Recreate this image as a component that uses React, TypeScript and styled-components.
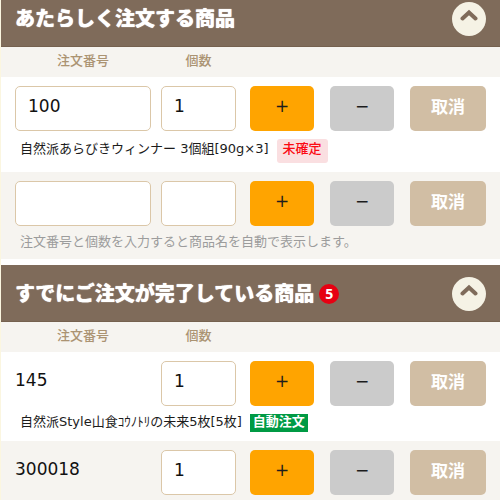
import React, { useState } from "react";
import styled, { createGlobalStyle, css } from "styled-components";

const GlobalStyle = createGlobalStyle`
  *, *::before, *::after { box-sizing: border-box; }
  body {
    margin: 0;
    background: #fff;
    color: #1c1c1c;
    font-family: "DejaVu Sans", "Noto Sans CJK JP", sans-serif;
    font-size: 13px;
  }
`;

const Page = styled.main`
  margin-top: -10px;
  border-left: 1px solid #fbf6e0;
  overflow-x: hidden;
`;

const Section = styled.section`
  & + & {
    margin-top: 6px;
  }
`;

const SectionHeader = styled.header`
  display: flex;
  align-items: center;
  justify-content: space-between;
  padding: 12px 14px 10px;
  background: #7f6b5a;
  border-bottom: 1px solid #75614f;
`;

const Title = styled.h2`
  display: flex;
  align-items: center;
  gap: 5px;
  margin: 0;
  padding-bottom: 2px;
  color: #fff;
  font-family: "Noto Sans CJK JP", sans-serif;
  font-size: 20px;
  font-weight: 900;
  line-height: 24px;
  text-shadow: 0 0 1px #fff;
`;

const CountBadge = styled.span`
  width: 20px;
  height: 20px;
  margin-top: 2px;
  border-radius: 50%;
  background: #e60012;
  font-family: "Noto Sans", sans-serif;
  font-size: 14px;
  font-weight: 700;
  line-height: 20px;
  text-align: center;
  text-shadow: none;
`;

const ToggleButton = styled.button`
  display: flex;
  align-items: center;
  justify-content: center;
  width: 34px;
  height: 34px;
  padding: 0 0 8px;
  border: 0;
  border-radius: 50%;
  background: #f5f2e5;
  cursor: pointer;
`;

const columns = css`
  display: grid;
  grid-template-columns: 221fr 236fr;
  column-gap: 14px;
  padding-left: 14px;
  padding-right: 14px;
`;

const Fields = styled.div`
  display: grid;
  grid-template-columns: 136fr 75fr;
  column-gap: 10px;
`;

const Actions = styled.div`
  display: grid;
  grid-template-columns: 64fr 64fr 76fr;
  column-gap: 16px;
`;

const ColumnHeads = styled.div`
  ${columns}
  padding-top: 4px;
  padding-bottom: 6px;
  background: #f6f4f0;
  color: #ab9372;
  font-weight: 500;
  line-height: 20px;
  text-align: center;
`;

const Row = styled.div<{ $shaded?: boolean }>`
  padding: 9px 0 7px;
  background: ${(p) => (p.$shaded ? "#f6f4f0" : "#fff")};
`;

const RowControls = styled.div`
  ${columns}
`;

const TextBox = styled.input`
  width: 100%;
  min-width: 0;
  height: 45px;
  padding: 0 12px 6px;
  border: 1px solid #dbc7a8;
  border-radius: 5px;
  background: #fff;
  color: #111;
  font: inherit;
  font-size: 17px;
`;

const OrderNumber = styled.span`
  padding-top: 7px;
  color: #111;
  font-size: 17px;
  line-height: 24px;
`;

const tones = {
  add: "#ffa400",
  subtract: "#cbcbcb",
  cancel: "#d1bea4",
};

const ActionButton = styled.button<{ $tone: keyof typeof tones }>`
  min-width: 0;
  height: 45px;
  padding: 0 0 6px;
  border: 0;
  border-radius: 5px;
  background: ${(p) => tones[p.$tone]};
  color: ${(p) => (p.$tone === "cancel" ? "#fff" : "#1c1c1c")};
  font: inherit;
  font-size: 17px;
  font-weight: ${(p) => (p.$tone === "cancel" ? 700 : 400)};
  cursor: pointer;
`;

const Description = styled.p<{ $muted?: boolean }>`
  display: flex;
  align-items: flex-start;
  gap: 8px;
  margin: 0;
  padding: 6px 19px 0;
  color: ${(p) => (p.$muted ? "#9c9c9c" : "#1c1c1c")};
  line-height: 20px;
`;

const PendingTag = styled.strong`
  padding: 0 6px 4px;
  border-radius: 3px;
  background: #fadfe1;
  color: #fb0a14;
  font-weight: 500;
`;

const AutoTag = styled.strong`
  margin-top: 2px;
  padding: 0 3px 2px;
  background: #009a44;
  color: #fff;
  font-weight: 700;
  line-height: 16px;
`;

const PendingDescription = styled(Description)`
  padding-top: 8px;
  padding-bottom: 2px;
`;

const OrderedDescription = styled(Description)`
  padding-bottom: 2px;
`;

function Header({ title, count }: { title: string; count?: number }) {
  return (
    <SectionHeader>
      <Title>
        {title}
        {count !== undefined && <CountBadge>{count}</CountBadge>}
      </Title>
      <ToggleButton type="button" aria-label={`${title}を閉じる`}>
        <svg width="18" height="12" viewBox="0 0 18 12" fill="none" aria-hidden="true">
          <path
            d="M2.500 9.500 9 3.500l6.500 6"
            stroke="#7f6b5a"
            strokeWidth="4"
            strokeLinecap="round"
            strokeLinejoin="miter"
          />
        </svg>
      </ToggleButton>
    </SectionHeader>
  );
}

function Heads() {
  return (
    <ColumnHeads>
      <Fields>
        <span>注文番号</span>
        <span>個数</span>
      </Fields>
    </ColumnHeads>
  );
}

type OrderProps = {
  number?: string;
  quantity?: string;
  fixed?: boolean;
  shaded?: boolean;
  children?: React.ReactNode;
};

function OrderRow({ number = "", quantity = "", fixed, shaded, children }: OrderProps) {
  const [code, setCode] = useState(number);
  const [amount, setAmount] = useState(quantity);
  const step = (by: number) =>
    setAmount((current) => String(Math.max(0, (Number(current) || 0) + by)));

  return (
    <Row $shaded={shaded}>
      <RowControls>
        <Fields>
          {fixed ? (
            <OrderNumber>{number}</OrderNumber>
          ) : (
            <TextBox
              aria-label="注文番号"
              inputMode="numeric"
              value={code}
              onChange={(e) => setCode(e.target.value)}
            />
          )}
          <TextBox
            aria-label="個数"
            inputMode="numeric"
            value={amount}
            onChange={(e) => setAmount(e.target.value)}
          />
        </Fields>
        <Actions>
          <ActionButton type="button" $tone="add" onClick={() => step(1)}>
            +
          </ActionButton>
          <ActionButton type="button" $tone="subtract" onClick={() => step(-1)}>
            −
          </ActionButton>
          <ActionButton type="button" $tone="cancel" onClick={() => setAmount("")}>
            取消
          </ActionButton>
        </Actions>
      </RowControls>
      {children}
    </Row>
  );
}

export default function App() {
  return (
    <>
      <GlobalStyle />
      <Page>
        <Section>
          <Header title="あたらしく注文する商品" />
          <Heads />
          <OrderRow number="100" quantity="1">
            <PendingDescription>
              自然派あらびきウィンナー 3個組[90g×3]
              <PendingTag>未確定</PendingTag>
            </PendingDescription>
          </OrderRow>
          <OrderRow shaded>
            <Description $muted>注文番号と個数を入力すると商品名を自動で表示します。</Description>
          </OrderRow>
        </Section>
        <Section>
          <Header title="すでにご注文が完了している商品" count={5} />
          <Heads />
          <OrderRow number="145" quantity="1" fixed>
            <OrderedDescription>
              自然派Style山食ｺｳﾉﾄﾘの未来5枚[5枚]
              <AutoTag>自動注文</AutoTag>
            </OrderedDescription>
          </OrderRow>
          <OrderRow number="300018" quantity="1" fixed shaded />
        </Section>
      </Page>
    </>
  );
}
